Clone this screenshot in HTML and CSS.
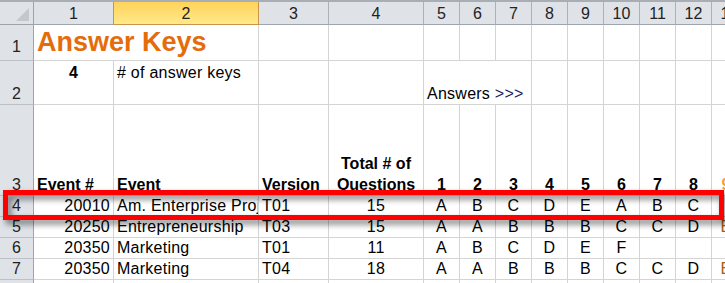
FILE: index.html
```html
<!DOCTYPE html>
<html lang="en">
<head>
    <meta charset="UTF-8">
    <title>Answer Keys</title>
    <link rel="stylesheet" href="styles.css">
</head>
<body>
<div class="page">
    <div class="topbar"></div>
    <div class="sheet">
        <!-- column headers -->
        <div class="corner"><svg width="13" height="13" viewBox="0 0 13 13"><polygon points="13,0 13,13 0,13" fill="#c4c8cd"/></svg></div>
        <div class="hd">1</div>
        <div class="hd sel">2</div>
        <div class="hd">3</div>
        <div class="hd">4</div>
        <div class="hd">5</div>
        <div class="hd">6</div>
        <div class="hd">7</div>
        <div class="hd">8</div>
        <div class="hd">9</div>
        <div class="hd">10</div>
        <div class="hd">11</div>
        <div class="hd">12</div>
        <div class="hd">13</div>

        <!-- row 1 -->
        <div class="rh rh-title">1</div>
        <div class="c title nob">Answer Keys</div>
        <div class="c"></div>
        <div class="c"></div>
        <div class="c"></div>
        <div class="c"></div>
        <div class="c"></div>
        <div class="c"></div>
        <div class="c"></div>
        <div class="c"></div>
        <div class="c"></div>
        <div class="c"></div>
        <div class="c"></div>
        <div class="c"></div>

        <!-- row 2 -->
        <div class="rh">2</div>
        <div class="c top m b">4</div>
        <div class="c top"># of answer keys</div>
        <div class="c"></div>
        <div class="c"></div>
        <div class="c nob">Answers&nbsp;<span class="arrows">&gt;&gt;&gt;</span></div>
        <div class="c nob"></div>
        <div class="c"></div>
        <div class="c"></div>
        <div class="c"></div>
        <div class="c"></div>
        <div class="c"></div>
        <div class="c"></div>
        <div class="c"></div>

        <!-- row 3 -->
        <div class="rh">3</div>
        <div class="c b">Event #</div>
        <div class="c b">Event</div>
        <div class="c b">Version</div>
        <div class="c b m wrap">Total # of<br>Questions</div>
        <div class="c b m">1</div>
        <div class="c b m">2</div>
        <div class="c b m">3</div>
        <div class="c b m">4</div>
        <div class="c b m">5</div>
        <div class="c b m">6</div>
        <div class="c b m">7</div>
        <div class="c b m">8</div>
        <div class="c b m next">9</div>

        <!-- row 4 -->
        <div class="rh">4</div>
        <div class="c r">20010</div>
        <div class="c clip">Am. Enterprise Project</div>
        <div class="c">T01</div>
        <div class="c m">15</div>
        <div class="c m">A</div>
        <div class="c m">B</div>
        <div class="c m">C</div>
        <div class="c m">D</div>
        <div class="c m">E</div>
        <div class="c m">A</div>
        <div class="c m">B</div>
        <div class="c m">C</div>
        <div class="c"></div>

        <!-- row 5 -->
        <div class="rh">5</div>
        <div class="c r">20250</div>
        <div class="c clip">Entrepreneurship</div>
        <div class="c">T03</div>
        <div class="c m">15</div>
        <div class="c m">A</div>
        <div class="c m">A</div>
        <div class="c m">B</div>
        <div class="c m">B</div>
        <div class="c m">B</div>
        <div class="c m">C</div>
        <div class="c m">C</div>
        <div class="c m">D</div>
        <div class="c m edge">E</div>

        <!-- row 6 -->
        <div class="rh">6</div>
        <div class="c r">20350</div>
        <div class="c clip">Marketing</div>
        <div class="c">T01</div>
        <div class="c m">11</div>
        <div class="c m">A</div>
        <div class="c m">B</div>
        <div class="c m">C</div>
        <div class="c m">D</div>
        <div class="c m">E</div>
        <div class="c m">F</div>
        <div class="c"></div>
        <div class="c"></div>
        <div class="c"></div>

        <!-- row 7 -->
        <div class="rh">7</div>
        <div class="c r">20350</div>
        <div class="c clip">Marketing</div>
        <div class="c">T04</div>
        <div class="c m">18</div>
        <div class="c m">A</div>
        <div class="c m">A</div>
        <div class="c m">B</div>
        <div class="c m">B</div>
        <div class="c m">B</div>
        <div class="c m">C</div>
        <div class="c m">C</div>
        <div class="c m">D</div>
        <div class="c m edge">E</div>

        <!-- row 8 -->
        <div class="rh"></div>
        <div class="c"></div>
        <div class="c"></div>
        <div class="c"></div>
        <div class="c"></div>
        <div class="c"></div>
        <div class="c"></div>
        <div class="c"></div>
        <div class="c"></div>
        <div class="c"></div>
        <div class="c"></div>
        <div class="c"></div>
        <div class="c"></div>
        <div class="c"></div>
    </div>
    <div class="mark"></div>
</div>
</body>
</html>
```

FILE: styles.css
```css
body {
    margin: 0;
    font-family: "Liberation Sans", Arial, sans-serif;
    font-size: 16px;
    color: #000;
    background: #fff;
    overflow: hidden;
}
.page {
    position: relative;
    width: 725px;
    height: 283px;
    overflow: hidden;
}
.topbar {
    height: 2px;
    background: #a9aeb5;
}
.sheet {
    display: grid;
    grid-template-columns: 34px 80px 145px 70px 95px repeat(9, 36px);
    grid-template-rows: 23px 36px 44px 91px repeat(5, 21px);
    width: max-content;
}
.sheet > div {
    box-sizing: border-box;
    display: flex;
    align-items: flex-end;
    line-height: 18px;
    white-space: nowrap;
    min-width: 0;
}

/* headers */
.corner {
    background: #dfe3e8;
    border-right: 1px solid #9ea4ad;
    border-bottom: 1px solid #9ea4ad;
    justify-content: flex-end;
    padding: 0 4px 3px 0;
}
.hd {
    background: #dfe3e8;
    border-right: 1px solid #acb1b8;
    border-bottom: 1px solid #9ea4ad;
    justify-content: center;
    padding-bottom: 1px;
    color: #222;
}
.hd.sel {
    background: linear-gradient(#ffd35a, #ffe98b);
    border-right-color: #c8964a;
    border-bottom-color: #c8964a;
    box-shadow: -1px 0 0 #c8964a;
}
.rh {
    background: #dfe3e8;
    border-right: 1px solid #9ea4ad;
    border-bottom: 1px solid #bdc1c7;
    justify-content: center;
    padding-bottom: 1px;
    color: #222;
}
.rh-title {
    padding-bottom: 4px;
}

/* cells */
.c {
    border-right: 1px solid #d4d4d4;
    border-bottom: 1px solid #d4d4d4;
    padding: 0 3px 1px;
    letter-spacing: 0.25px;
}
.c.nob {
    border-right: none;
}
.r {
    justify-content: flex-end;
}
.m {
    justify-content: center;
}
.b {
    font-weight: bold;
    letter-spacing: 0;
}
.top {
    align-items: flex-start !important;
    padding-top: 3px;
}
.clip {
    overflow: hidden;
}
.title {
    font-size: 27px;
    font-weight: bold;
    letter-spacing: 0;
    line-height: 31px !important;
    padding-bottom: 2px;
    color: #e46c0a;
}
.wrap {
    white-space: normal !important;
    text-align: center;
    line-height: 21px !important;
    padding-bottom: 0;
}
.arrows {
    color: #1c1a5e;
}
.next {
    color: #f0a035;
    padding-right: 10px;
}
.edge {
    color: #a8600f;
    padding-right: 10px;
}

/* red highlight round row 4 */
.mark {
    position: absolute;
    left: 3px;
    top: 190px;
    width: 721px;
    height: 30px;
    box-sizing: border-box;
    border: 5px solid #f00;
    filter: drop-shadow(3px 4px 3px rgba(0, 0, 0, 0.55));
}
```
